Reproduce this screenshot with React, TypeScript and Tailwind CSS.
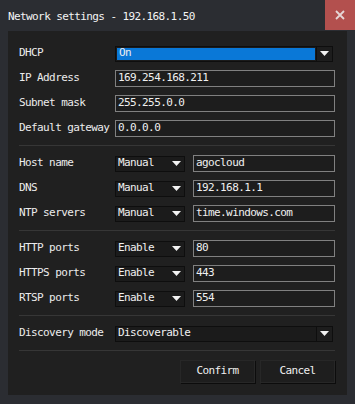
import React from "react";

const FONT = "font-['DejaVu_Sans_Mono','Liberation_Mono',monospace] text-[11px] tracking-[-0.6px]";

function Arrow() {
  return (
    <svg width="9" height="5" viewBox="0 0 9 5" className="block">
      <path d="M0 0 H9 L4.5 5 Z" fill="#f2f2f2" />
    </svg>
  );
}

function Select({ value, wide, active }: { value: string; wide?: boolean; active?: boolean }) {
  return (
    <div
      className={
        "flex h-[16px] items-stretch border border-[#0e0e0e] bg-[#1b1b1b] " +
        (wide ? "w-[218px]" : "w-[70px]")
      }
    >
      <div
        className={
          "flex flex-1 items-center pl-[2px] text-[#f0f0f0] " +
          (active ? "m-[1px] bg-[#0a78d7]" : "")
        }
      >
        {value}
      </div>
      <div
        className={
          "flex w-[16px] items-center justify-center " +
          (wide ? "border-l border-[#0e0e0e] bg-[#1d1d1d]" : "")
        }
      >
        <Arrow />
      </div>
    </div>
  );
}

function Input({ value }: { value: string }) {
  return (
    <div className="flex h-[17px] flex-1 items-center border border-[#808080] bg-[#1d1d1d] pl-[2px] text-[#f0f0f0]">
      {value}
    </div>
  );
}

function Row({ label, children }: { label: string; children: React.ReactNode }) {
  return (
    <div className="flex h-[17px] items-center">
      <div className="w-[96px] shrink-0 text-[#ececec]">{label}</div>
      <div className="flex flex-1 items-center gap-[8px]">{children}</div>
    </div>
  );
}

function Divider() {
  return <div className="mt-[8px] mb-[9px] h-px bg-[#363636]" />;
}

export default function App() {
  return (
    <div className={"h-[404px] w-[355px] bg-[#2b2d32] " + FONT}>
      <div className="flex h-[31px] items-start">
        <div className="flex-1 pl-[8px] pt-[9px] text-[#f4f4f4]">Network settings - 192.168.1.50</div>
        <div className="flex h-[30px] w-[30px] items-center justify-center bg-[#b3504e]">
          <svg width="10" height="10" viewBox="0 0 10 10">
            <path d="M1 1 L9 9 M9 1 L1 9" stroke="#e6d6d6" strokeWidth="1.8" />
          </svg>
        </div>
      </div>
      <div className="mx-[8px] flex h-[364px] flex-col bg-[#202020] pl-[11px] pr-[12px] pt-[14px]">
        <div className="flex flex-col gap-[8px]">
          <Row label="DHCP">
            <Select value="On" wide active />
          </Row>
          <Row label="IP Address">
            <Input value="169.254.168.211" />
          </Row>
          <Row label="Subnet mask">
            <Input value="255.255.0.0" />
          </Row>
          <Row label="Default gateway">
            <Input value="0.0.0.0" />
          </Row>
        </div>
        <Divider />
        <div className="flex flex-col gap-[8px]">
          <Row label="Host name">
            <Select value="Manual" />
            <Input value="agocloud" />
          </Row>
          <Row label="DNS">
            <Select value="Manual" />
            <Input value="192.168.1.1" />
          </Row>
          <Row label="NTP servers">
            <Select value="Manual" />
            <Input value="time.windows.com" />
          </Row>
        </div>
        <Divider />
        <div className="flex flex-col gap-[8px]">
          <Row label="HTTP ports">
            <Select value="Enable" />
            <Input value="80" />
          </Row>
          <Row label="HTTPS ports">
            <Select value="Enable" />
            <Input value="443" />
          </Row>
          <Row label="RTSP ports">
            <Select value="Enable" />
            <Input value="554" />
          </Row>
        </div>
        <Divider />
        <Row label="Discovery mode">
          <Select value="Discoverable" wide />
        </Row>
        <div className="mt-[8px] h-px bg-[#363636]" />
        <div className="mt-[9px] flex justify-end gap-[5px]">
          <button className="flex h-[23px] w-[75px] items-center justify-center border border-[#272727] bg-[#1e1e1e] text-[#f0f0f0] shadow-[1px_1px_0_#0c0c0c]">
            Confirm
          </button>
          <button className="flex h-[23px] w-[75px] items-center justify-center border border-[#272727] bg-[#1e1e1e] text-[#f0f0f0] shadow-[1px_1px_0_#0c0c0c]">
            Cancel
          </button>
        </div>
      </div>
    </div>
  );
}
